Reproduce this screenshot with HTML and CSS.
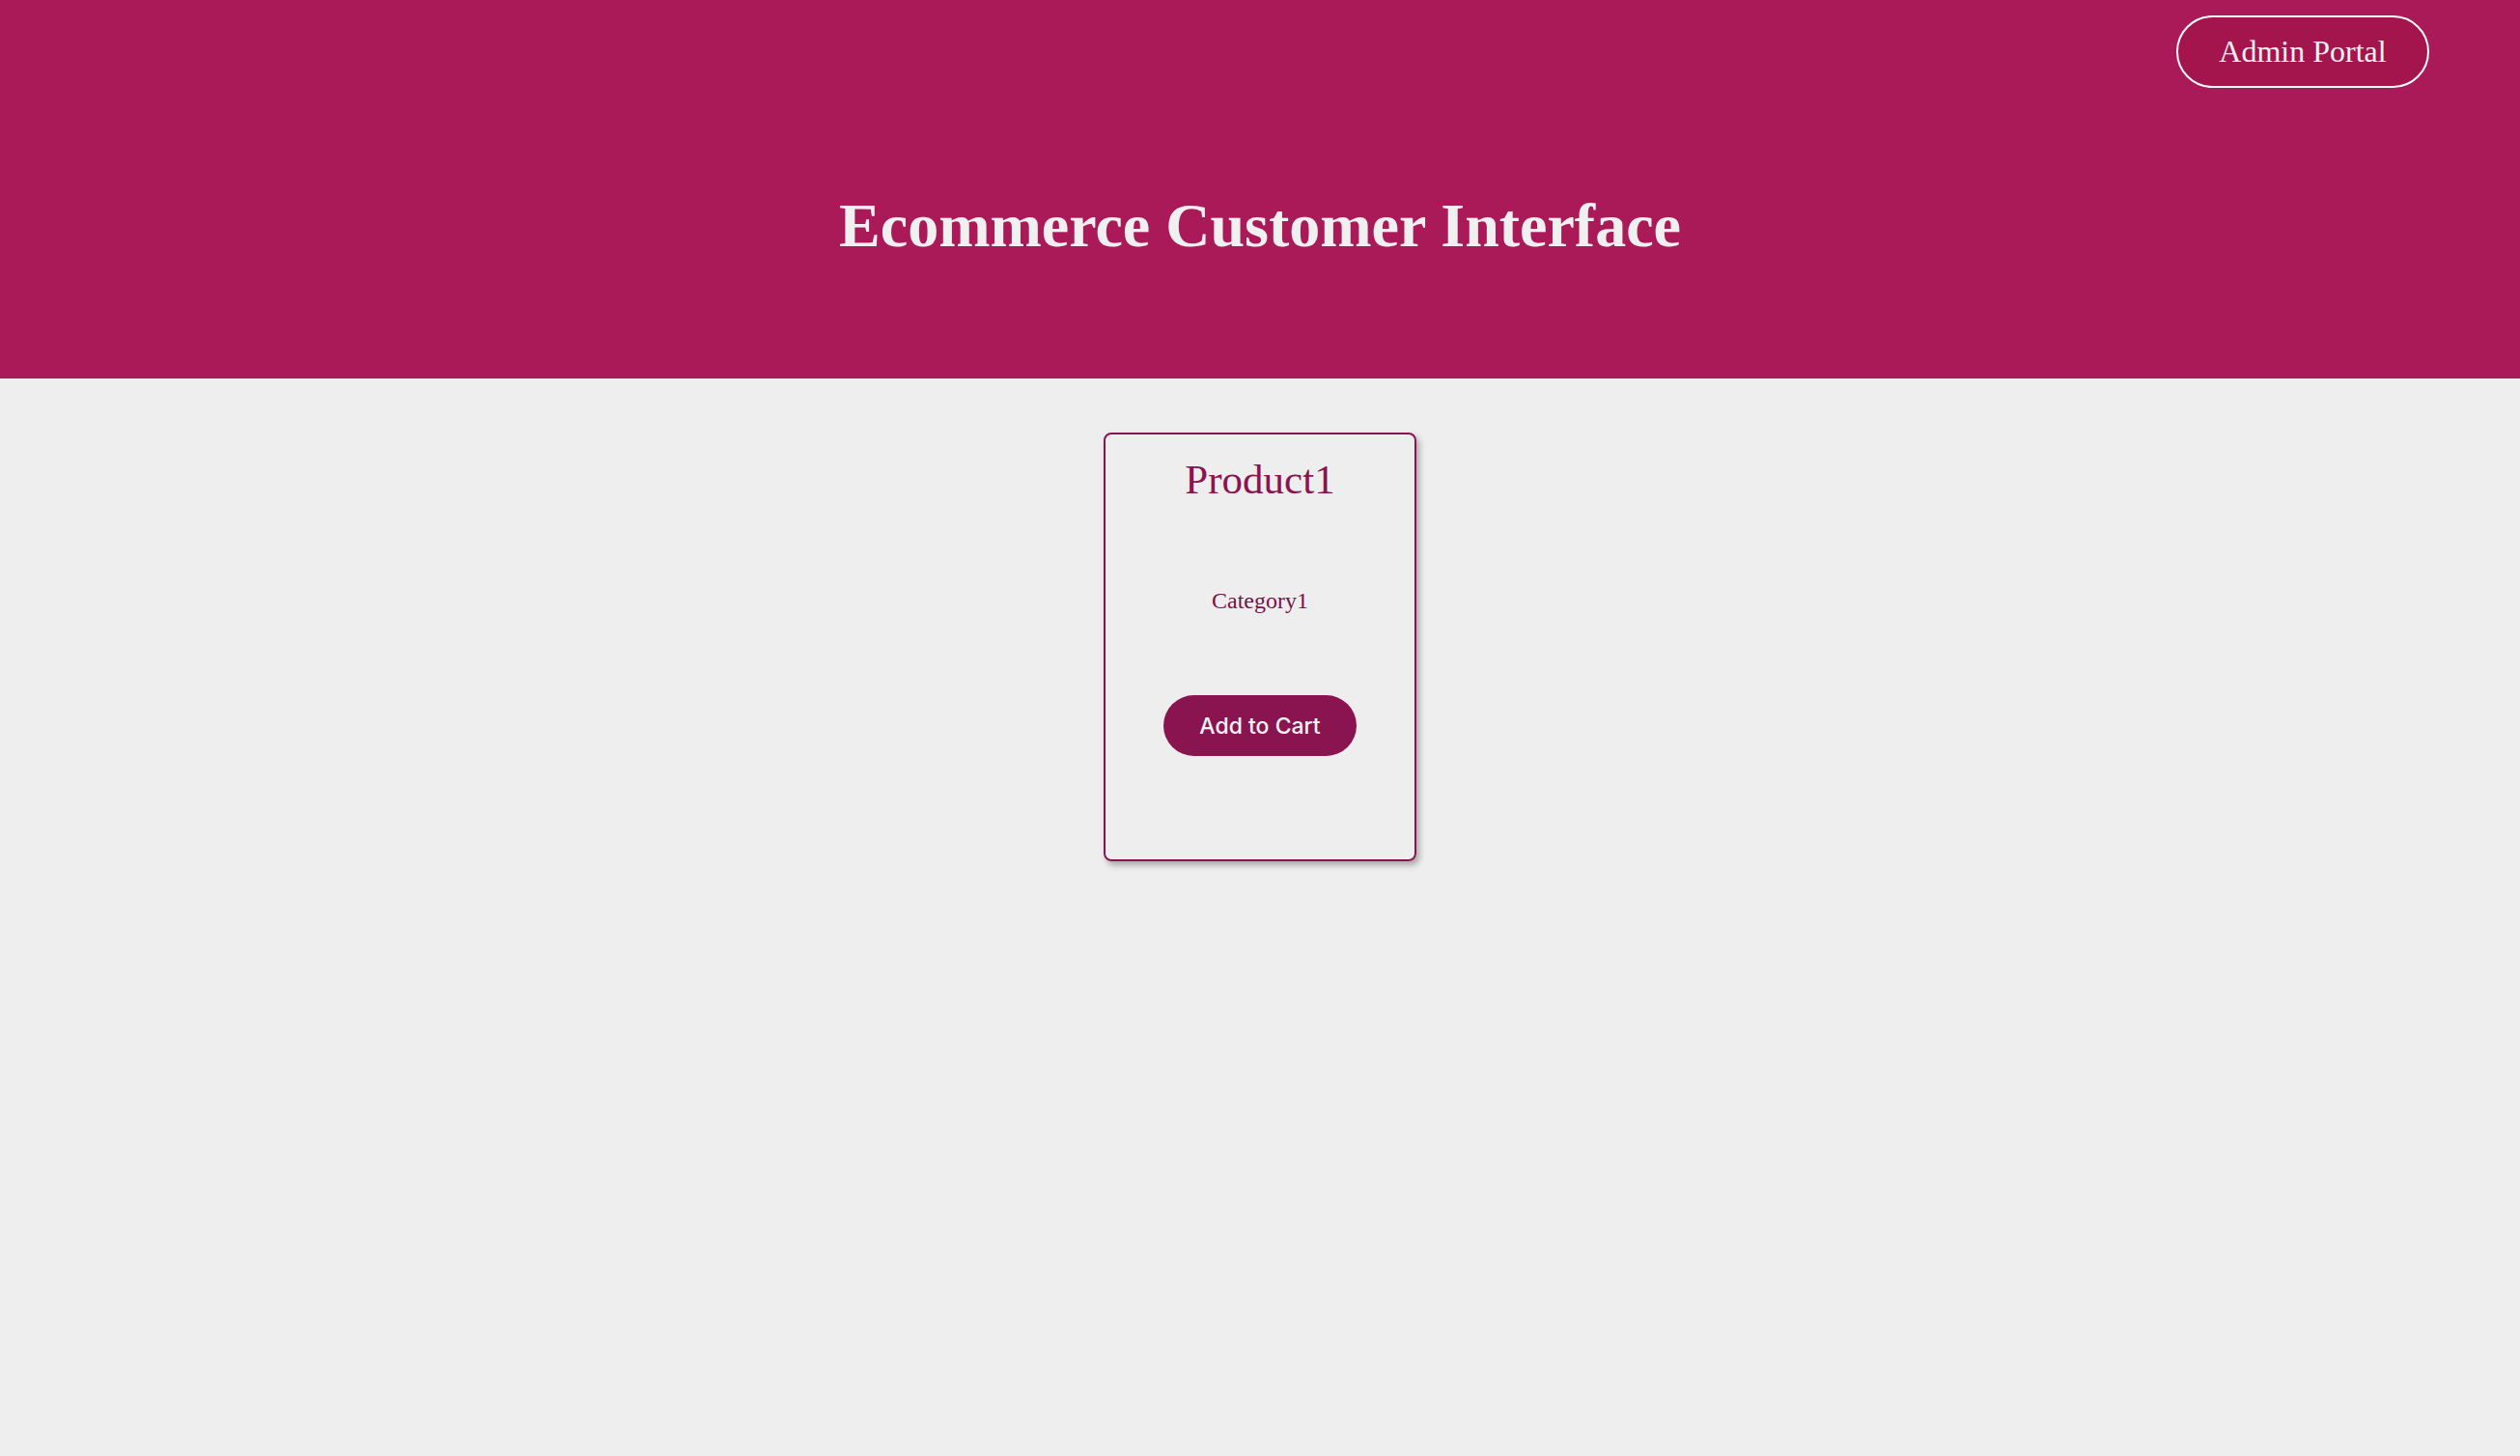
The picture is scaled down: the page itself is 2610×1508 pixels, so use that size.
FILE: index.html
```html
<!DOCTYPE html>
<html>
<head>
<meta charset="utf-8">
<link rel="stylesheet" href="styles.css">
</head>
<body>
<header class="hero">
  <div class="topbar">
    <button class="admin-btn">Admin Portal</button>
  </div>
  <h1 class="title">Ecommerce Customer Interface</h1>
</header>
<main class="products">
  <div class="card">
    <h2 class="card-name">Product1</h2>
    <p class="card-cat">Category1</p>
    <button class="cart-btn">Add to Cart</button>
  </div>
</main>
</body>
</html>
```
FILE: styles.css
```css
html, body {
  margin: 0;
  padding: 0;
}
body {
  background: #eeeeee;
  font-family: "Liberation Serif", "Times New Roman", serif;
  min-height: 100vh;
}
.hero {
  background: #ab1a58;
  height: 392px;
  box-sizing: border-box;
  padding: 16px 94px 0 94px;
  display: flex;
  flex-direction: column;
}
.topbar {
  display: flex;
  justify-content: flex-end;
}
.admin-btn {
  width: 262px;
  height: 75px;
  border: 2px solid #ffffff;
  border-radius: 38px;
  background: #a4154e;
  color: #f0f0f0;
  font-family: "Liberation Serif", "Times New Roman", serif;
  font-size: 32px;
  padding: 0;
}
.title {
  margin: 106px 0 0 0;
  text-align: center;
  color: #f0f0f0;
  font-size: 64px;
  font-weight: bold;
  line-height: 73px;
}
.products {
  display: flex;
  justify-content: center;
  padding-top: 56px;
}
.card {
  width: 324px;
  height: 444px;
  box-sizing: border-box;
  border: 2px solid #8a1450;
  border-radius: 8px;
  box-shadow: 3px 4px 6px rgba(0, 0, 0, 0.3);
  display: flex;
  flex-direction: column;
  align-items: center;
  padding-top: 22px;
}
.card-name {
  margin: 0;
  font-weight: normal;
  font-size: 43px;
  line-height: 49px;
  color: #8a1450;
}
.card-cat {
  margin: 87px 0 0 0;
  font-size: 24px;
  line-height: 28px;
  color: #7a1045;
}
.cart-btn {
  margin-top: 84px;
  width: 200px;
  height: 63px;
  border: none;
  border-radius: 32px;
  background: #8a1450;
  color: #f4f4f4;
  font-family: Inter, "Noto Sans", sans-serif;
  font-size: 23px;
  font-weight: 500;
  padding: 0;
}
```
